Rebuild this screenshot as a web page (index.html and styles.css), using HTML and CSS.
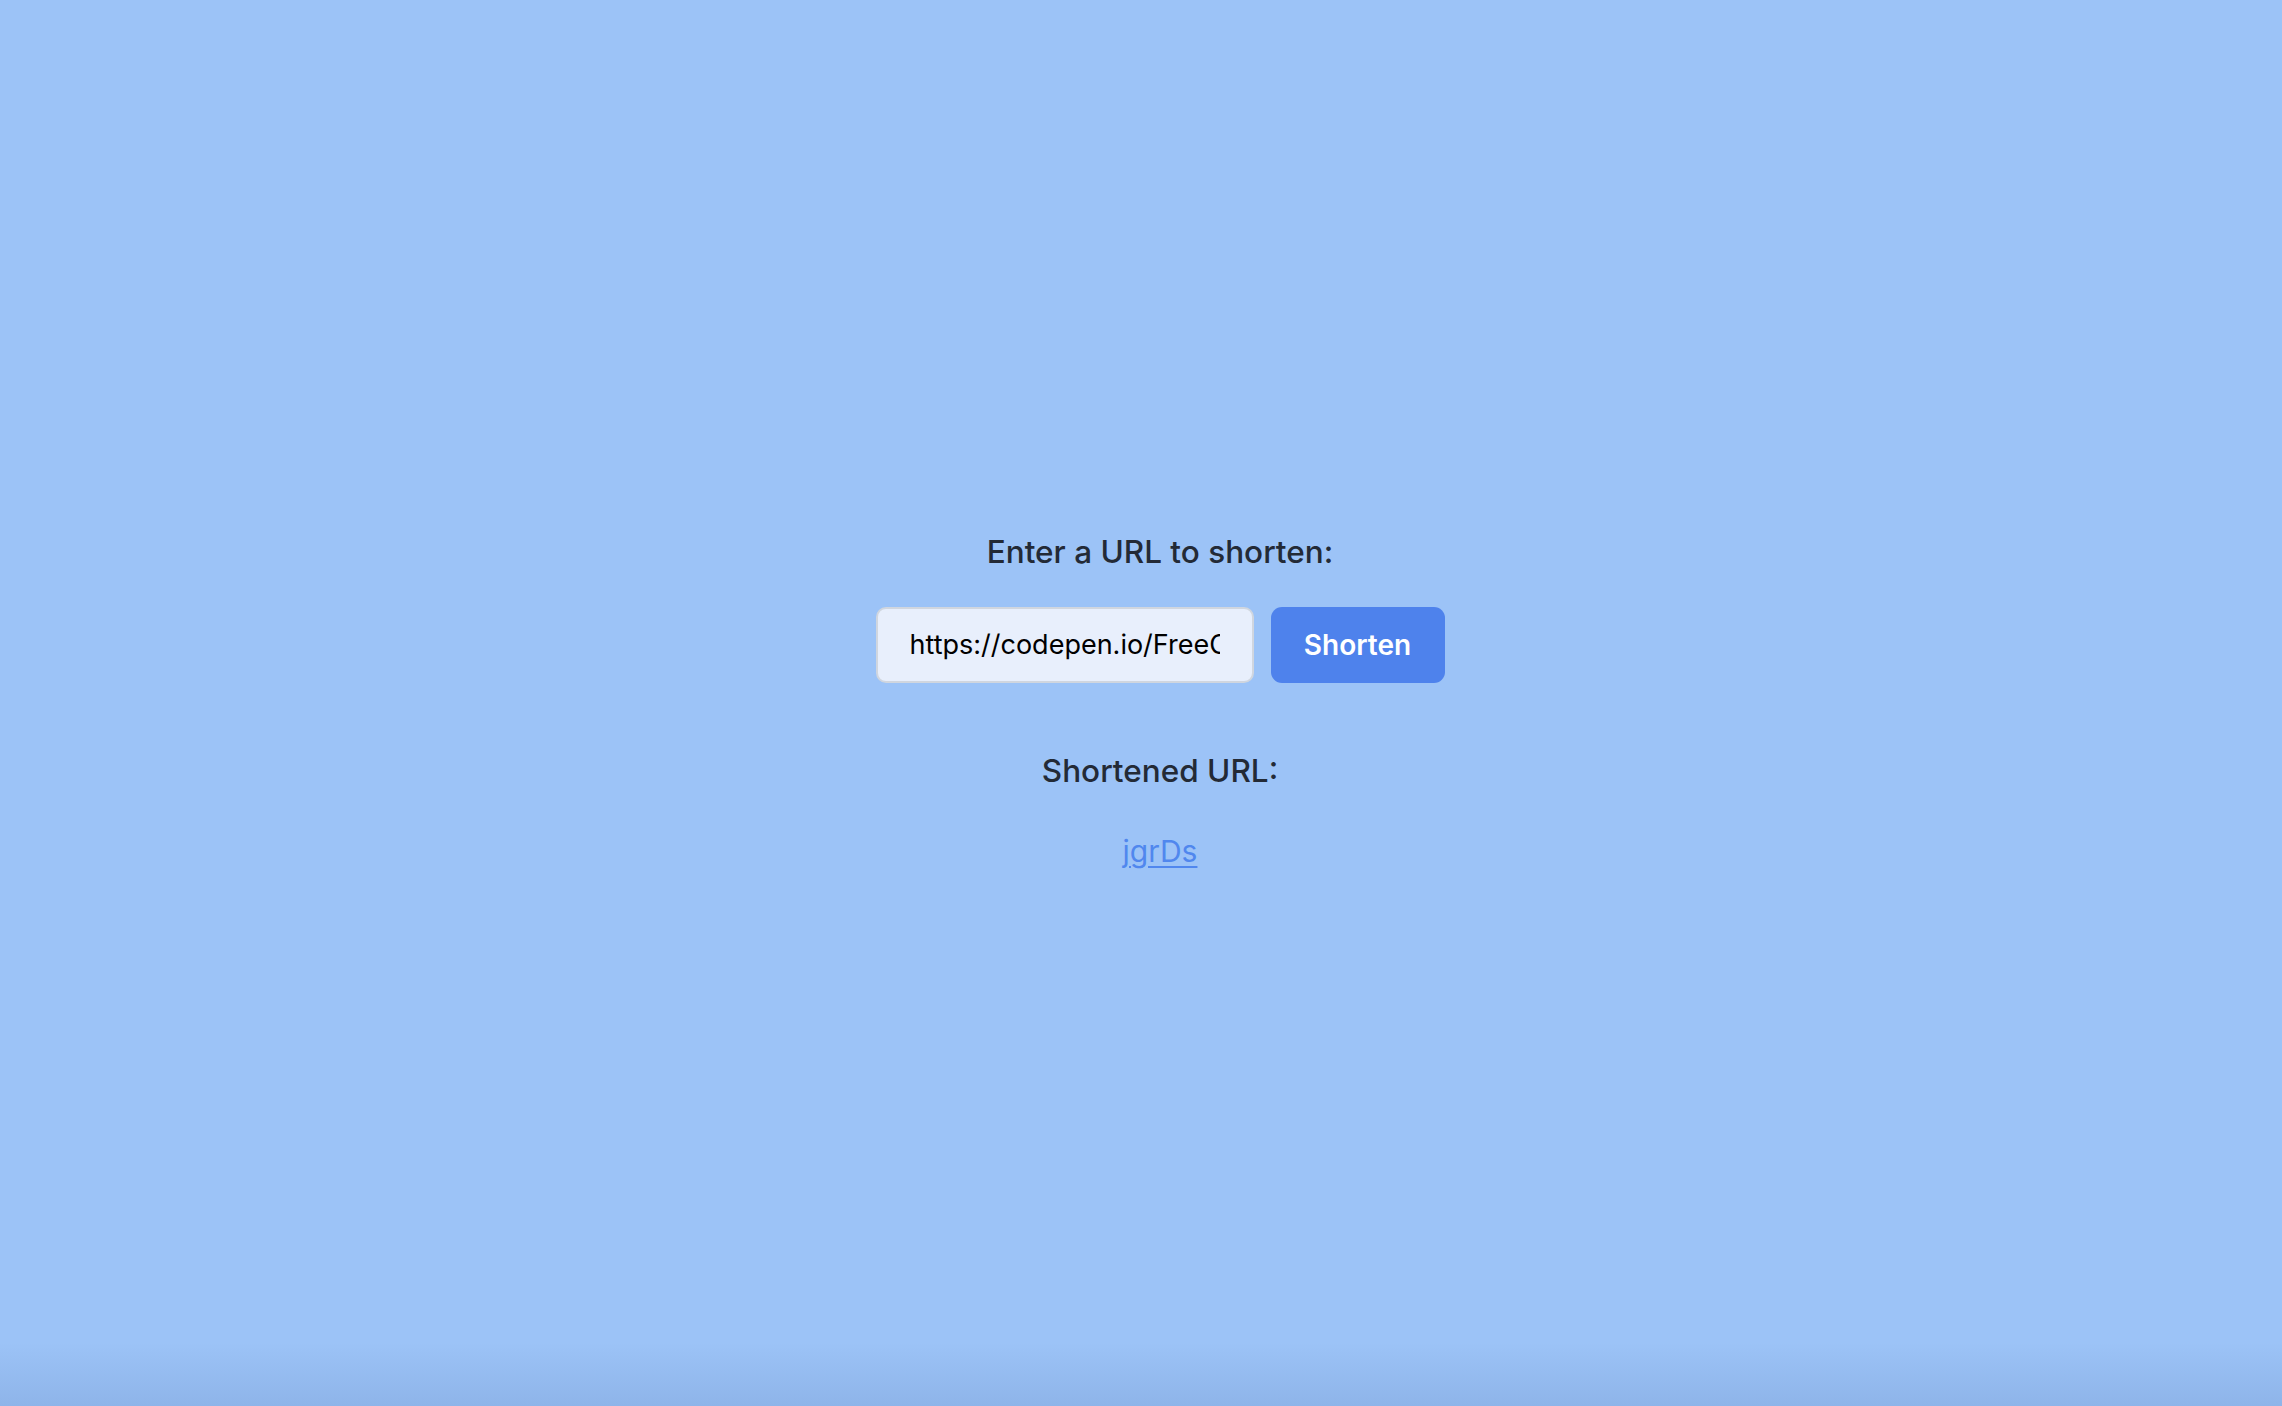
FILE: index.html
```html
<!DOCTYPE html>
<html lang="en">
<head>
<meta charset="utf-8">
<title>URL Shortener</title>
<link rel="stylesheet" href="styles.css">
</head>
<body>
<main class="app">
  <h2 class="title">Enter a URL to shorten:</h2>
  <form class="form">
    <input class="url-input" type="text" value="https://codepen.io/FreeCodeCamp/pen/shortener">
    <button class="btn" type="button">Shorten</button>
  </form>
  <h2 class="result-title">Shortened URL:</h2>
  <a class="result-link" href="#">jgrDs</a>
</main>
</body>
</html>
```

FILE: styles.css
```css
html, body {
  margin: 0;
  height: 100%;
}
body {
  background-color: #9cc3f7;
  background-image: linear-gradient(to bottom, rgba(0,0,0,0) calc(100% - 64px), rgba(20,50,110,0.10) 100%);
  font-family: Inter, "Noto Sans", sans-serif;
  display: flex;
  align-items: center;
  justify-content: center;
  padding-left: 38px;
  box-sizing: border-box;
}
.app {
  display: flex;
  flex-direction: column;
  align-items: center;
  margin-top: -4px;
}
.title, .result-title {
  margin: 0;
  font-size: 31.5px;
  line-height: 36px;
  font-weight: 500;
  color: #232a36;
}
.form {
  display: flex;
  gap: 17px;
  margin: 37px 0 70px;
}
.url-input {
  box-sizing: border-box;
  width: 378px;
  height: 76px;
  padding: 0 32px;
  border: 2px solid #d0d6df;
  border-radius: 10px;
  background: #e8effc;
  font-family: Inter, "Noto Sans", sans-serif;
  font-size: 27px;
  color: #000;
  outline: none;
}
.btn {
  box-sizing: border-box;
  width: 174px;
  height: 76px;
  border: none;
  border-radius: 11px;
  background: #4e82ec;
  color: #fff;
  font-family: Inter, "Noto Sans", sans-serif;
  font-size: 28px;
  font-weight: 600;
  cursor: pointer;
}
.result-link {
  margin-top: 44px;
  font-size: 30px;
  line-height: 36px;
  color: #5087ee;
  text-decoration: underline;
  text-underline-offset: 4px;
  text-decoration-thickness: 2px;
}
```
